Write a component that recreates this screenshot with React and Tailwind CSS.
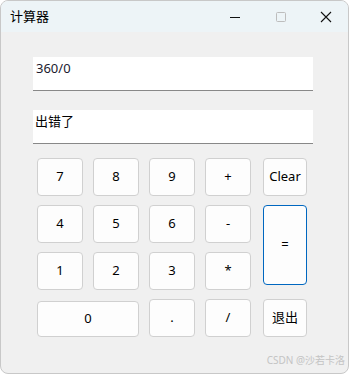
import React from "react";

const font = { fontFamily: '"Noto Sans", "Noto Sans CJK SC", sans-serif' };

function Btn({ children, className = "", blue = false }) {
  return (
    <div
      className={`flex items-center justify-center bg-[#fdfdfd] border rounded-[4px] text-[13px] text-black ${
        blue ? "border-[#0067c0]" : "border-[#d0d0d0]"
      } ${className}`}
    >
      {children}
    </div>
  );
}

export default function App() {
  return (
    <div
      className="relative w-[349px] h-[374px] bg-[#f0f0f0] rounded-[8px] border border-[#c8c8c8] overflow-hidden flex flex-col"
      style={font}
    >
      <div className="h-[31px] shrink-0 bg-[#edf4f7] flex items-center pl-[9px] pr-[16px]">
        <span className="text-[13px] text-black leading-none">计算器</span>
        <div className="flex-1" />
        <svg width="12" height="12" viewBox="0 0 12 12" className="mr-[34px]">
          <line x1="1" y1="6.5" x2="11" y2="6.5" stroke="#111" strokeWidth="1" />
        </svg>
        <svg width="12" height="12" viewBox="0 0 12 12" className="mr-[33px]">
          <rect x="1.5" y="1.5" width="9" height="9" rx="1" fill="none" stroke="#bdbdbd" strokeWidth="1" />
        </svg>
        <svg width="12" height="12" viewBox="0 0 12 12">
          <path d="M1 1 L11 11 M11 1 L1 11" stroke="#111" strokeWidth="1.1" />
        </svg>
      </div>

      <div className="flex flex-col pl-[32px] pt-[25px]">
        <div className="w-[280px] h-[34px] bg-white border-b border-[#888] px-[3px] pt-[3px] text-[13px] text-[#1a1a2e] leading-[16px]">
          360/0
        </div>
        <div className="w-[280px] h-[34px] mt-[19px] bg-white border-b border-[#888] px-[2px] pt-[3px] text-[13px] text-black leading-[16px]">
          出错了
        </div>
      </div>

      <div className="grid grid-cols-[46px_46px_46px_46px_46px] grid-rows-[38px_38px_38px_38px] gap-x-[10px] gap-y-[9px] ml-[36px] mt-[14px]">
        <Btn>7</Btn>
        <Btn>8</Btn>
        <Btn>9</Btn>
        <Btn>+</Btn>
        <Btn className="ml-[2px]">Clear</Btn>

        <Btn>4</Btn>
        <Btn>5</Btn>
        <Btn>6</Btn>
        <Btn>-</Btn>
        <Btn blue className="ml-[2px] row-span-2 self-start h-[80px]">=</Btn>

        <Btn>1</Btn>
        <Btn>2</Btn>
        <Btn>3</Btn>
        <Btn>*</Btn>

        <Btn className="col-span-2 mt-[2px]">0</Btn>
        <Btn>.</Btn>
        <Btn>/</Btn>
        <Btn className="ml-[2px]">退出</Btn>
      </div>

      <div className="absolute right-[3px] bottom-[8px] text-[10px] text-[#c4c4c4] leading-none">
        CSDN @沙若卡洛
      </div>
    </div>
  );
}
